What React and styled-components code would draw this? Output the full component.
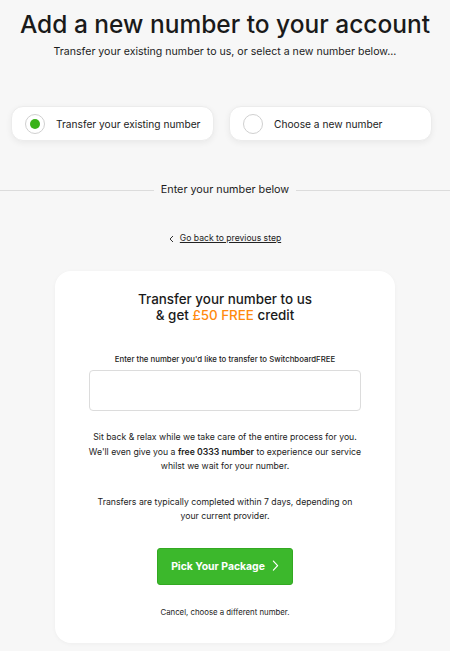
import React from 'react';
import styled, { createGlobalStyle } from 'styled-components';

const GlobalStyle = createGlobalStyle`
  html, body {
    margin: 0;
    padding: 0;
    background: #f7f7f7;
  }
  body {
    font-family: Inter, "Open Sans", "Liberation Sans", sans-serif;
    color: #1c1c1c;
  }
`;

const Page = styled.div`
  width: 450px;
  min-height: 651px;
  display: flex;
  flex-direction: column;
  align-items: center;
  padding-top: 8px;
  box-sizing: border-box;
  overflow: hidden;
`;

const Title = styled.h1`
  margin: 0;
  font-size: 24.5px;
  font-weight: 500;
  line-height: 32px;
  color: #1a1a1a;
`;

const Subtitle = styled.p`
  margin: 5px 0 0;
  font-size: 10.6px;
  line-height: 14px;
  color: #1c1c1c;
`;

const Options = styled.div`
  display: grid;
  grid-template-columns: 203px 203px;
  gap: 15px;
  margin-top: 47px;
  width: 100%;
  padding-left: 11px;
  box-sizing: border-box;
`;

const Option = styled.div`
  height: 35px;
  background: #fff;
  border: 1px solid #ececec;
  border-radius: 12px;
  box-shadow: 0 2px 6px rgba(0, 0, 0, 0.06);
  display: flex;
  align-items: center;
  gap: 11px;
  padding-left: 13px;
  box-sizing: border-box;
  font-size: 10.2px;
  color: #1c1c1c;
  white-space: nowrap;
`;

const Radio = styled.span`
  width: 20px;
  height: 20px;
  flex: none;
  border-radius: 50%;
  border: 1.5px solid #d0d0d0;
  box-sizing: border-box;
  display: flex;
  align-items: center;
  justify-content: center;
  &::after {
    content: "";
    width: 10px;
    height: 10px;
    border-radius: 50%;
    background: ${p => (p.$checked ? '#3ab21a' : 'transparent')};
  }
`;

const Divider = styled.div`
  width: 100%;
  margin-top: 42px;
  display: flex;
  align-items: center;
  gap: 7px;
  font-size: 10.8px;
  line-height: 14px;
  color: #1c1c1c;
  &::before, &::after {
    content: "";
    flex: 1;
    height: 1px;
    background: #dcdcdc;
  }
`;

const BackLink = styled.a`
  margin-top: 36px;
  font-size: 8.6px;
  line-height: 11px;
  color: #222;
  display: flex;
  align-items: center;
  gap: 6px;
  span {
    text-decoration: underline;
  }
`;

const Card = styled.div`
  margin-top: 27px;
  width: 340px;
  background: #fff;
  border-radius: 16px;
  box-shadow: 0 1px 4px rgba(0, 0, 0, 0.04);
  display: flex;
  flex-direction: column;
  align-items: center;
  padding: 20px 10px 26px;
  box-sizing: border-box;
  text-align: center;
  white-space: nowrap;
`;

const CardTitle = styled.h2`
  margin: 0;
  font-size: 13.4px;
  line-height: 16px;
  font-weight: 500;
  color: #1a1a1a;
`;

const Orange = styled.span`
  color: #ff8a0d;
`;

const Label = styled.label`
  margin-top: 31px;
  font-size: 7.8px;
  line-height: 10px;
  font-weight: 500;
  color: #222;
`;

const Input = styled.input`
  margin-top: 6px;
  width: 272px;
  height: 41px;
  border: 1px solid #dcdcdc;
  border-radius: 4px;
  box-sizing: border-box;
  background: #fff;
`;

const Text = styled.p`
  margin: ${p => p.$mt}px 0 0;
  font-size: 8.7px;
  line-height: 14.5px;
  color: #1c1c1c;
  b {
    font-weight: 600;
  }
`;

const Button = styled.button`
  margin-top: 24px;
  width: 136px;
  height: 37px;
  border: 1px solid #33a922;
  border-radius: 3px;
  background: #3cb82c;
  color: #fff;
  font-family: inherit;
  font-size: 10.4px;
  font-weight: 700;
  display: flex;
  align-items: center;
  justify-content: center;
  gap: 7px;
  padding: 0;
`;

const Cancel = styled.p`
  margin: 22px 0 0;
  font-size: 7.8px;
  line-height: 10px;
  color: #222;
`;

const Chevron = ({ size = 10, width = 1.4 }) => (
  <svg width={size} height={size * 1.6} viewBox="0 0 10 16" fill="none">
    <path d="M2 1.5 L8 8 L2 14.5" stroke="currentColor" strokeWidth={width} strokeLinecap="round" strokeLinejoin="round" />
  </svg>
);

export default function App() {
  return (
    <>
      <GlobalStyle />
      <Page>
        <Title>Add a new number to your account</Title>
        <Subtitle>Transfer your existing number to us, or select a new number below...</Subtitle>
        <Options>
          <Option>
            <Radio $checked />
            Transfer your existing number
          </Option>
          <Option>
            <Radio />
            Choose a new number
          </Option>
        </Options>
        <Divider>Enter your number below</Divider>
        <BackLink>
          <svg width="5" height="8" viewBox="0 0 5 8" fill="none">
            <path d="M4 1 L1 4 L4 7" stroke="#333" strokeWidth="1" />
          </svg>
          <span>Go back to previous step</span>
        </BackLink>
        <Card>
          <CardTitle>
            Transfer your number to us
            <br />& get <Orange>£50 FREE</Orange> credit
          </CardTitle>
          <Label>Enter the number you'd like to transfer to SwitchboardFREE</Label>
          <Input />
          <Text $mt={19}>
            Sit back &amp; relax while we take care of the entire process for you.
            <br />We'll even give you a <b>free 0333 number</b> to experience our service
            <br />whilst we wait for your number.
          </Text>
          <Text $mt={21}>
            Transfers are typically completed within 7 days, depending on
            <br />your current provider.
          </Text>
          <Button>
            Pick Your Package <Chevron size={7} width={1.7} />
          </Button>
          <Cancel>Cancel, choose a different number.</Cancel>
        </Card>
      </Page>
    </>
  );
}
